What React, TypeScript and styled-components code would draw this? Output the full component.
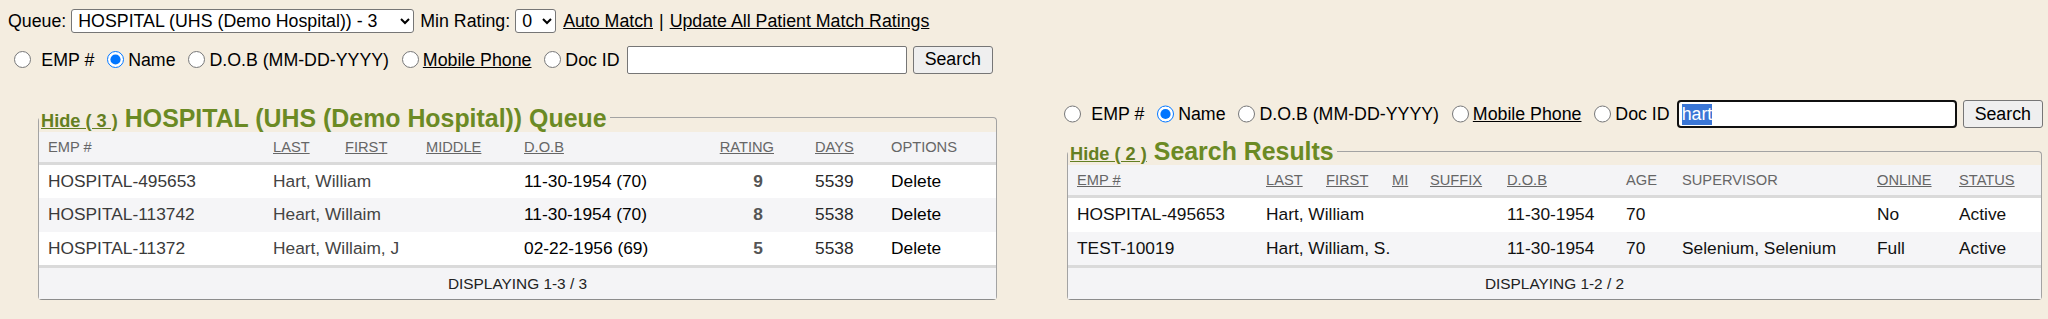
import React, { useEffect, useRef } from "react";
import styled, { createGlobalStyle } from "styled-components";

const GlobalStyle = createGlobalStyle`
  html, body { margin: 0; padding: 0; background: #f4ede0; }
  body {
    font-family: "Liberation Sans", Arial, sans-serif;
    font-size: 17.78px;
    color: #000;
  }
`;

const Page = styled.div`
  padding-top: 9px;
`;

const TopBar = styled.div`
  display: flex;
  flex-direction: column;
  gap: 12.5px;
  padding-left: 8px;
`;

const FilterRow = styled.div`
  display: flex;
  align-items: center;
  height: 24px;
  white-space: nowrap;
`;

const Label = styled.span<{ $ml?: number; $mr?: number }>`
  margin-left: ${(p) => p.$ml ?? 0}px;
  margin-right: ${(p) => p.$mr ?? 0}px;
  line-height: 20px;
`;

const TextLink = styled.a<{ $ml?: number; $mr?: number }>`
  color: #000;
  text-decoration: underline;
  cursor: pointer;
  margin-left: ${(p) => p.$ml ?? 0}px;
  margin-right: ${(p) => p.$mr ?? 0}px;
  line-height: 20px;
`;

const Select = styled.select<{ $w: number }>`
  width: ${(p) => p.$w}px;
  height: 24px;
  box-sizing: border-box;
  font-family: "Liberation Sans", Arial, sans-serif;
  font-size: 17.78px;
  color: #000;
  background: #fff;
  border: 1px solid #767676;
  border-radius: 3px;
  padding: 0 0 0 2px;
  margin: 0;
`;

const SearchRow = styled.div`
  display: flex;
  align-items: center;
  height: 28px;
  white-space: nowrap;
`;

const Radio = styled.input.attrs({ type: "radio" })`
  width: 17.33px;
  height: 17.33px;
  margin: 0 4px 0 6px;
  flex: none;
`;

const TextInput = styled.input<{ $focused?: boolean }>`
  width: 280px;
  height: 28px;
  box-sizing: border-box;
  margin: 0 0 0 7px;
  padding: 0 3px;
  font-family: "Liberation Sans", Arial, sans-serif;
  font-size: 17.78px;
  color: #000;
  background: #fff;
  border: ${(p) => (p.$focused ? "2px solid #101010" : "1px solid #767676")};
  border-radius: ${(p) => (p.$focused ? "4px" : "2px")};
  outline: none;
  &::selection {
    background: #3a76d6;
    color: #fff;
  }
`;

const Button = styled.button`
  height: 28px;
  box-sizing: border-box;
  margin: 0 0 0 6px;
  padding: 0 11px;
  font-family: "Liberation Sans", Arial, sans-serif;
  font-size: 17.78px;
  color: #000;
  background: #efefef;
  border: 1px solid #767676;
  border-radius: 3px;
`;

const Panels = styled.div`
  display: flex;
  align-items: flex-end;
  margin-top: 26.5px;
  padding-left: 38px;
`;

const SideColumn = styled.div`
  display: flex;
  flex-direction: column;
  width: 990px;
  margin-left: 61px;
`;

const Panel = styled.fieldset<{ $w: number; $ml?: number; $mt?: number }>`
  width: ${(p) => p.$w}px;
  box-sizing: border-box;
  min-width: 0;
  margin: ${(p) => p.$mt ?? 0}px 0 0 ${(p) => p.$ml ?? 0}px;
  padding: 0;
  border: 1px solid #a3a3a3;
  border-bottom-color: #8c8c8c;
  border-radius: 4px;
`;

const Legend = styled.legend`
  padding: 0 3px 0 2px;
  height: 28px;
  line-height: 28px;
  white-space: nowrap;
`;

const HideLink = styled.a`
  color: #647f22;
  font-size: 18.2px;
  font-weight: bold;
  text-decoration: underline;
  cursor: pointer;
`;

const Title = styled.span`
  color: #6b8a24;
  font-size: 24.9px;
  font-weight: bold;
  margin-left: 7px;
`;

const GridRow = styled.div<{ $cols: string; $h: number; $bg: string }>`
  display: grid;
  grid-template-columns: ${(p) => p.$cols};
  height: ${(p) => p.$h}px;
  align-items: center;
  background: ${(p) => p.$bg};
`;

const HeadRow = styled(GridRow)`
  border-bottom: 3px solid #dadada;
`;

const HeadCell = styled.div<{ $sort?: boolean; $align?: string; $pr?: number }>`
  font-size: 14.67px;
  color: #666;
  padding-left: 9px;
  padding-right: ${(p) => p.$pr ?? 0}px;
  text-align: ${(p) => p.$align ?? "left"};
  text-decoration: ${(p) => (p.$sort ? "underline" : "none")};
  white-space: nowrap;
`;

const Cell = styled.div<{
  $color?: string;
  $bold?: boolean;
  $align?: string;
  $pr?: number;
  $span?: number;
}>`
  font-size: 17.33px;
  color: ${(p) => p.$color ?? "#111"};
  font-weight: ${(p) => (p.$bold ? "bold" : "normal")};
  padding-left: 9px;
  padding-right: ${(p) => p.$pr ?? 0}px;
  text-align: ${(p) => p.$align ?? "left"};
  grid-column: span ${(p) => p.$span ?? 1};
  white-space: nowrap;
`;

const Footer = styled.div`
  height: 31px;
  display: flex;
  align-items: center;
  justify-content: center;
  border-top: 3px solid #dadada;
  background: #f4f4f6;
  font-size: 15.4px;
  color: #222;
`;

type SearchFormProps = { name: string; focused?: boolean };

function SearchForm({ name, focused }: SearchFormProps) {
  const ref = useRef<HTMLInputElement>(null);
  useEffect(() => {
    if (focused && ref.current) {
      ref.current.focus();
      ref.current.setSelectionRange(0, ref.current.value.length);
    }
  }, [focused]);
  return (
    <SearchRow>
      <Radio name={name} />
      <Label $ml={6} $mr={6.5}>EMP #</Label>
      <Radio name={name} defaultChecked />
      <Label $mr={6.5}>Name</Label>
      <Radio name={name} />
      <Label $mr={6.5}>D.O.B (MM-DD-YYYY)</Label>
      <Radio name={name} />
      <TextLink $mr={6.5}>Mobile Phone</TextLink>
      <Radio name={name} />
      <Label>Doc ID</Label>
      <TextInput ref={ref} $focused={focused} defaultValue={focused ? "hart" : ""} />
      <Button>Search</Button>
    </SearchRow>
  );
}

const QUEUE_COLS = "225px 72px 81px 98px 175px 116px 76px 1fr";
const WHITE = "#ffffff";
const STRIPE = "#f5f5f7";
const HEAD_BG = "#f4f4f6";

const queueRows = [
  { emp: "HOSPITAL-495653", name: "Hart, William", dob: "11-30-1954 (70)", rating: "9", days: "5539" },
  { emp: "HOSPITAL-113742", name: "Heart, Willaim", dob: "11-30-1954 (70)", rating: "8", days: "5538" },
  { emp: "HOSPITAL-11372", name: "Heart, Willaim, J", dob: "02-22-1956 (69)", rating: "5", days: "5538" },
];

const RESULT_COLS = "189px 60px 66px 38px 77px 119px 56px 195px 82px 1fr";

const resultRows = [
  { emp: "HOSPITAL-495653", name: "Hart, William", dob: "11-30-1954", age: "70", sup: "", online: "No", status: "Active" },
  { emp: "TEST-10019", name: "Hart, William, S.", dob: "11-30-1954", age: "70", sup: "Selenium, Selenium", online: "Full", status: "Active" },
];

function QueuePanel() {
  return (
    <Panel $w={959}>
      <Legend>
        <HideLink>Hide ( 3 )</HideLink>
        <Title>HOSPITAL (UHS (Demo Hospital)) Queue</Title>
      </Legend>
      <HeadRow $cols={QUEUE_COLS} $h={30} $bg={HEAD_BG}>
        <HeadCell>EMP #</HeadCell>
        <HeadCell $sort>LAST</HeadCell>
        <HeadCell $sort>FIRST</HeadCell>
        <HeadCell $sort>MIDDLE</HeadCell>
        <HeadCell $sort>D.O.B</HeadCell>
        <HeadCell $sort $align="right" $pr={32}>RATING</HeadCell>
        <HeadCell $sort>DAYS</HeadCell>
        <HeadCell>OPTIONS</HeadCell>
      </HeadRow>
      {queueRows.map((r, i) => (
        <GridRow key={r.emp} $cols={QUEUE_COLS} $h={33.5} $bg={i % 2 ? STRIPE : WHITE}>
          <Cell $color="#3a3a3a">{r.emp}</Cell>
          <Cell $color="#444" $span={3}>{r.name}</Cell>
          <Cell $color="#000">{r.dob}</Cell>
          <Cell $color="#555" $bold $align="right" $pr={43}>{r.rating}</Cell>
          <Cell $color="#2a2a2a">{r.days}</Cell>
          <Cell $color="#000">Delete</Cell>
        </GridRow>
      ))}
      <Footer>DISPLAYING 1-3 / 3</Footer>
    </Panel>
  );
}

function ResultsPanel() {
  return (
    <Panel $w={975} $ml={9} $mt={9}>
      <Legend>
        <HideLink>Hide ( 2 )</HideLink>
        <Title>Search Results</Title>
      </Legend>
      <HeadRow $cols={RESULT_COLS} $h={30} $bg={HEAD_BG}>
        <HeadCell $sort>EMP #</HeadCell>
        <HeadCell $sort>LAST</HeadCell>
        <HeadCell $sort>FIRST</HeadCell>
        <HeadCell $sort>MI</HeadCell>
        <HeadCell $sort>SUFFIX</HeadCell>
        <HeadCell $sort>D.O.B</HeadCell>
        <HeadCell>AGE</HeadCell>
        <HeadCell>SUPERVISOR</HeadCell>
        <HeadCell $sort>ONLINE</HeadCell>
        <HeadCell $sort>STATUS</HeadCell>
      </HeadRow>
      {resultRows.map((r, i) => (
        <GridRow key={r.emp} $cols={RESULT_COLS} $h={33.5} $bg={i % 2 ? STRIPE : WHITE}>
          <Cell>{r.emp}</Cell>
          <Cell $span={4}>{r.name}</Cell>
          <Cell>{r.dob}</Cell>
          <Cell>{r.age}</Cell>
          <Cell>{r.sup}</Cell>
          <Cell>{r.online}</Cell>
          <Cell>{r.status}</Cell>
        </GridRow>
      ))}
      <Footer>DISPLAYING 1-2 / 2</Footer>
    </Panel>
  );
}

export default function App() {
  return (
    <>
      <GlobalStyle />
      <Page>
        <TopBar>
          <FilterRow>
            <Label $mr={5}>Queue:</Label>
            <Select $w={343} defaultValue="3">
              <option value="3">HOSPITAL (UHS (Demo Hospital)) - 3</option>
            </Select>
            <Label $ml={6} $mr={5}>Min Rating:</Label>
            <Select $w={41} defaultValue="0">
              <option value="0">0</option>
            </Select>
            <TextLink $ml={7}>Auto Match</TextLink>
            <Label $ml={6} $mr={6}>|</Label>
            <TextLink>Update All Patient Match Ratings</TextLink>
          </FilterRow>
          <SearchForm name="topSearch" />
        </TopBar>
        <Panels>
          <QueuePanel />
          <SideColumn>
            <SearchForm name="sideSearch" focused />
            <ResultsPanel />
          </SideColumn>
        </Panels>
      </Page>
    </>
  );
}
